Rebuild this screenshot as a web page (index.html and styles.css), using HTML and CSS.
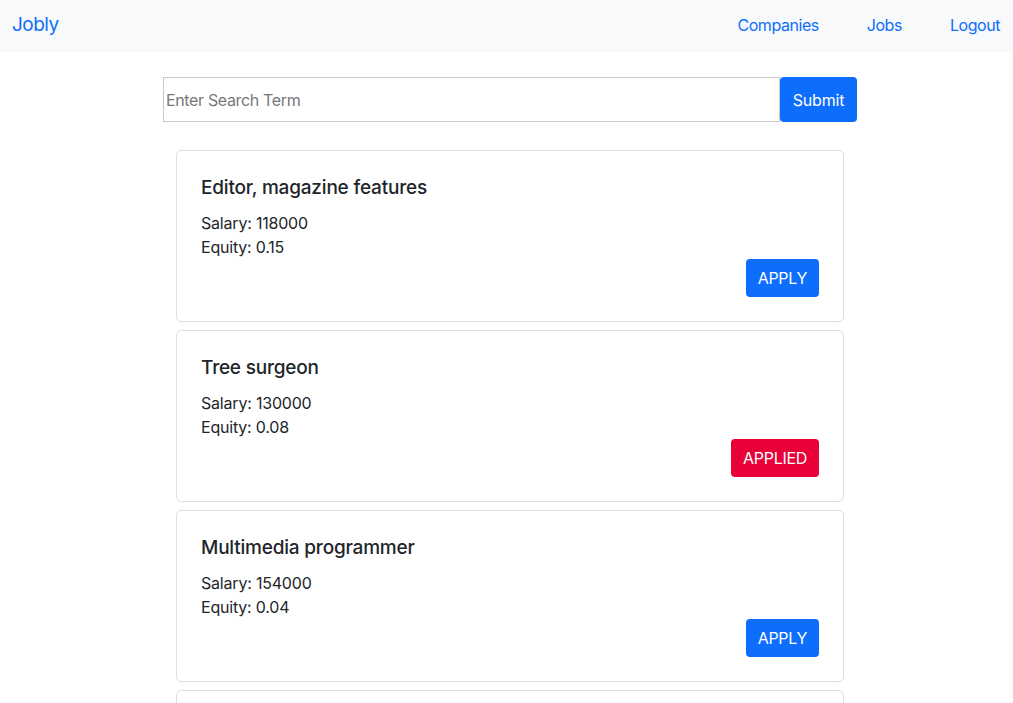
FILE: index.html
```html
<!DOCTYPE html>
<html lang="en">
<head>
<meta charset="utf-8">
<title>Jobly</title>
<link rel="stylesheet" href="styles.css">
</head>
<body>
<nav class="navbar">
  <a class="brand" href="#">Jobly</a>
  <ul class="nav-links">
    <li><a href="#">Companies</a></li>
    <li><a href="#">Jobs</a></li>
    <li><a href="#">Logout</a></li>
  </ul>
</nav>
<main class="main">
  <form class="search">
    <input class="search-input" type="text" placeholder="Enter Search Term">
    <button class="search-btn" type="button">Submit</button>
  </form>
  <div class="job-list">
    <div class="card">
      <h5 class="card-title">Editor, magazine features</h5>
      <p class="card-line">Salary: 118000</p>
      <p class="card-line">Equity: 0.15</p>
      <div class="card-actions"><button class="btn btn-apply" type="button">APPLY</button></div>
    </div>
    <div class="card">
      <h5 class="card-title">Tree surgeon</h5>
      <p class="card-line">Salary: 130000</p>
      <p class="card-line">Equity: 0.08</p>
      <div class="card-actions"><button class="btn btn-applied" type="button">APPLIED</button></div>
    </div>
    <div class="card">
      <h5 class="card-title">Multimedia programmer</h5>
      <p class="card-line">Salary: 154000</p>
      <p class="card-line">Equity: 0.04</p>
      <div class="card-actions"><button class="btn btn-apply" type="button">APPLY</button></div>
    </div>
    <div class="card card-peek"></div>
  </div>
</main>
</body>
</html>
```

FILE: styles.css
```css
* { box-sizing: border-box; }
html, body { margin: 0; padding: 0; }
body {
  font-family: Inter, "Noto Sans", "Liberation Sans", sans-serif;
  font-size: 16px;
  line-height: 24px;
  letter-spacing: -0.2px;
  color: #212529;
  background: #fff;
}
a { text-decoration: none; color: #0d6efd; }

.navbar {
  height: 52px;
  background: #f8f9fa;
  display: flex;
  align-items: center;
  justify-content: space-between;
  padding: 0 13px 2px 12px;
}
.brand {
  font-size: 19px;
  line-height: 30px;
  letter-spacing: -0.5px;
  color: #0d6efd;
}
.nav-links {
  list-style: none;
  margin: 0;
  padding: 0;
  display: flex;
  gap: 48px;
}
.nav-links a {
  font-size: 16px;
  letter-spacing: -0.45px;
  color: #0d6efd;
}

.main { padding-top: 25px; }
.search {
  display: flex;
  width: 694px;
  margin: 0 0 28px 163px;
  height: 45px;
}
.search-input {
  flex: 1;
  height: 45px;
  border: 1px solid #c8c8c8;
  border-radius: 0;
  padding: 0 2px;
  font-family: Inter, "Noto Sans", sans-serif;
  font-size: 16px;
  letter-spacing: -0.35px;
  color: #212529;
  outline: none;
}
.search-input::placeholder { color: #777; }
.search-btn {
  width: 77px;
  height: 45px;
  border: none;
  background: #0d6efd;
  color: #fff;
  border-radius: 4px;
  font-family: Inter, "Noto Sans", sans-serif;
  font-size: 16px;
  letter-spacing: -0.2px;
}

.job-list {
  width: 668px;
  margin-left: 176px;
  display: flex;
  flex-direction: column;
  gap: 8px;
}
.card {
  border: 1px solid #dfdfdf;
  border-radius: 5px;
  padding: 24px;
  height: 172px;
}
.card-title {
  margin: 0 0 11px;
  padding-top: 1px;
  font-size: 19px;
  line-height: 24px;
  font-weight: 500;
  letter-spacing: -0.2px;
}
.card-line { margin: 0; }
.card-actions {
  display: flex;
  justify-content: flex-end;
  margin-top: 0;
}
.btn {
  border: none;
  border-radius: 4px;
  color: #fff;
  font-family: Inter, "Noto Sans", sans-serif;
  font-size: 16px;
  line-height: 24px;
  letter-spacing: -0.3px;
  padding: 7px 12px;
  height: 38px;
}
.btn-apply { background: #0d6efd; }
.btn-applied { background: #ea0038; }
```
